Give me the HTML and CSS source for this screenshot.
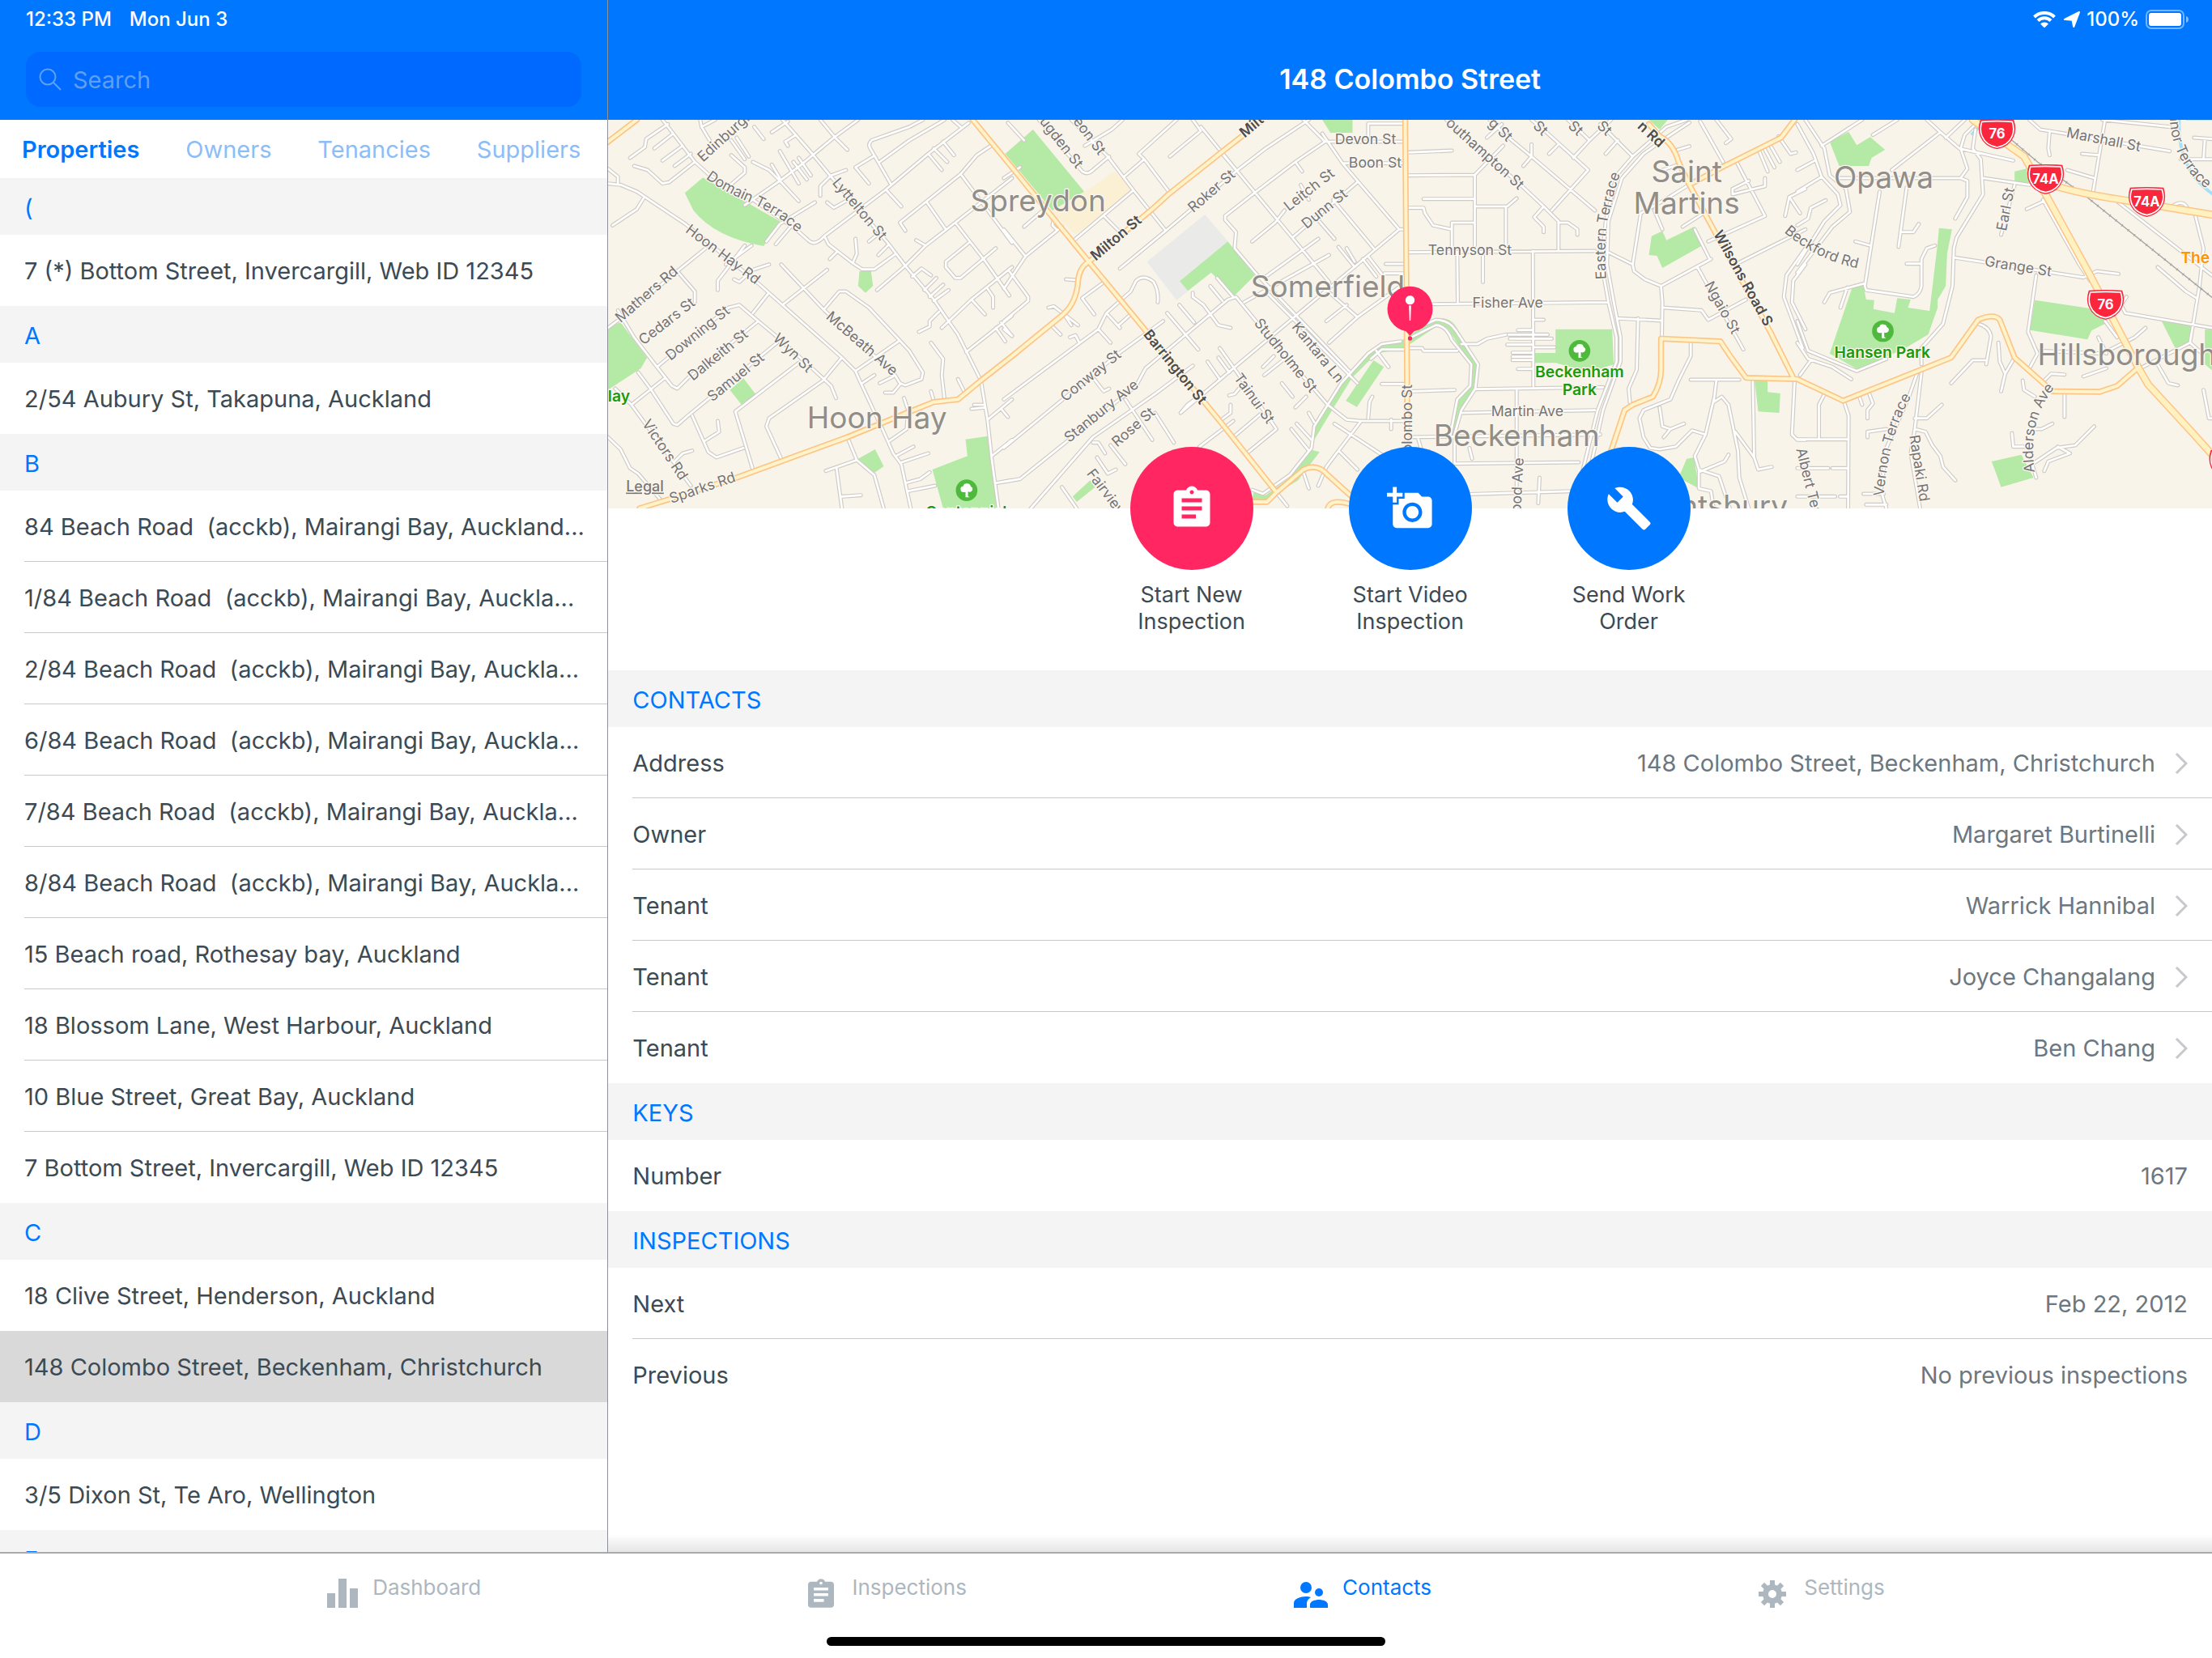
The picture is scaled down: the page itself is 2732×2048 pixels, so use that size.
FILE: index.html
```html
<!DOCTYPE html>
<html lang="en">
<head>
<meta charset="utf-8">
<meta name="viewport" content="width=device-width, initial-scale=1">
<title>148 Colombo Street</title>
<link rel="stylesheet" href="styles.css">
</head>
<body>
<div class="app">
  <div class="split">
    <aside class="sidebar">
      <header class="bar">
        <div class="status"><span>12:33 PM</span><span>Mon Jun 3</span></div>
        <label class="search">
          <svg class="search-icon" viewBox="0 0 28 28" aria-hidden="true"><circle cx="11" cy="11" r="9.500"/><path d="M18 18l9 9"/></svg>
          <input class="search-input" type="search" placeholder="Search" aria-label="Search">
        </label>
      </header>
      <div class="tabs">
        <button class="tab tab-on" type="button">Properties</button>
        <button class="tab" type="button">Owners</button>
        <button class="tab" type="button">Tenancies</button>
        <button class="tab" type="button">Suppliers</button>
      </div>
      <div class="list">
        <h2 class="section">(</h2>
        <ul class="rows">
          <li class="row"><a class="cell" href="#">7 (*) Bottom Street, Invercargill, Web ID 12345</a></li>
        </ul>
        <h2 class="section">A</h2>
        <ul class="rows">
          <li class="row"><a class="cell" href="#">2/54 Aubury St, Takapuna, Auckland</a></li>
        </ul>
        <h2 class="section">B</h2>
        <ul class="rows">
          <li class="row"><a class="cell" href="#">84 Beach Road  (acckb), Mairangi Bay, Auckland...</a></li>
          <li class="row"><a class="cell" href="#">1/84 Beach Road  (acckb), Mairangi Bay, Auckla...</a></li>
          <li class="row"><a class="cell" href="#">2/84 Beach Road  (acckb), Mairangi Bay, Auckla...</a></li>
          <li class="row"><a class="cell" href="#">6/84 Beach Road  (acckb), Mairangi Bay, Auckla...</a></li>
          <li class="row"><a class="cell" href="#">7/84 Beach Road  (acckb), Mairangi Bay, Auckla...</a></li>
          <li class="row"><a class="cell" href="#">8/84 Beach Road  (acckb), Mairangi Bay, Auckla...</a></li>
          <li class="row"><a class="cell" href="#">15 Beach road, Rothesay bay, Auckland</a></li>
          <li class="row"><a class="cell" href="#">18 Blossom Lane, West Harbour, Auckland</a></li>
          <li class="row"><a class="cell" href="#">10 Blue Street, Great Bay, Auckland</a></li>
          <li class="row"><a class="cell" href="#">7 Bottom Street, Invercargill, Web ID 12345</a></li>
        </ul>
        <h2 class="section">C</h2>
        <ul class="rows">
          <li class="row row-before"><a class="cell" href="#">18 Clive Street, Henderson, Auckland</a></li>
          <li class="row row-selected"><a class="cell" href="#" aria-current="true">148 Colombo Street, Beckenham, Christchurch</a></li>
        </ul>
        <h2 class="section">D</h2>
        <ul class="rows">
          <li class="row"><a class="cell" href="#">3/5 Dixon St, Te Aro, Wellington</a></li>
        </ul>
        <h2 class="section">E</h2>
      </div>
    </aside>

    <main class="detail">
      <header class="bar">
        <div class="status status-right">
          <svg class="wifi" viewBox="0 0 28 20" aria-hidden="true"><path d="M1.500 7a18 18 0 0 1 25 0M6 11.500a11.500 11.500 0 0 1 16 0" fill="none" stroke="#fff" stroke-width="4"/><path d="M9 15.500a7 7 0 0 1 10 0L14 20.500z" fill="#fff"/></svg>
          <svg class="arrow" viewBox="0 0 18 18" aria-hidden="true"><path d="M17 1L11 17L9.500 9.500L1 9z" fill="#fff" stroke="#fff" stroke-width="2" stroke-linejoin="round"/></svg>
          <span>100%</span>
          <svg class="battery" viewBox="0 0 54 24" aria-hidden="true"><rect x="1" y="1" width="46" height="22" rx="6" fill="none" stroke="#fff" stroke-opacity=".45" stroke-width="2"/><rect x="4" y="4" width="40" height="16" rx="3" fill="#fff"/><path d="M50 8c4 1 4 7 0 8z" fill="#fff" fill-opacity=".5"/></svg>
        </div>
        <h1 class="title">148 Colombo Street</h1>
      </header>

      <svg class="map" viewBox="3 24 5943 1440" preserveAspectRatio="xMidYMid slice" role="img" aria-label="Map of Beckenham">
        <defs>
          <g id="minor">
            <path d="M205 24L245 75L325 180L375 225L540 320L700 430L745 470Q770 495 805 455L1030 285L1190 150L1340 35M3 260L50 265L110 290L290 410L560 630L650 710L870 905L920 955L940 1000L1020 1170L1060 1260L1090 1300L1125 1464M135 315L110 355L20 415M3 205L40 235V260M85 165L140 125L145 95L225 40M175 130L245 75M205 175L280 120M250 195L310 150M100 195L150 210L205 260L230 255L325 180M345 24L350 50L380 100M350 50L400 24M480 90L525 160M460 100L510 170M460 155L510 200V220L440 280M540 180L600 210L640 250L710 325M510 340L640 250L720 190L840 90L930 24M650 24L760 150L830 235L1040 480L1105 565L1210 690L1265 770L1300 820L1385 990L1410 1140L1425 1280L1450 1464M790 24L845 90L890 135M610 70L670 30M545 50L580 95M700 80L660 105L670 120M640 140L710 260M690 180L740 245M710 165L755 230M610 190L640 240M985 160L920 200L970 260M1170 24L1120 50L980 100Q965 115 975 130L1050 260M1010 180L1120 100L1250 24M1190 150L1240 210M1210 130L1260 180M1245 105L1285 155M1280 24L1310 50M1035 285L1090 345M1430 115L1370 155L1310 225L1085 405L1105 435M1310 225L1500 480M1185 330L1255 430M1500 240L1290 405L1180 490L1105 565L1000 655M1145 470L1180 490M1290 405L1395 540L1490 675M1440 500L1310 610H1290L1255 570V550L1340 480M1500 570L1350 690L1240 795M1350 690L1400 745M1410 650L1430 680V720M1130 605L1165 575L1200 600M1175 655L1220 610M1195 680L1245 635M1210 695L1265 655M1230 735L1195 770V790L1155 810M1330 885L1500 750M1440 795L1475 845M1460 775L1500 825M805 455L820 485L910 555L945 578H990L1070 520M910 555L925 520L920 465M825 540L850 515M1005 525L1040 490M970 475L1000 450M590 475L640 410L770 330M625 485L680 420M815 330L840 350L885 325M790 305V270L830 230L885 210M3 795L50 760L260 585L365 500M260 585L325 660V700M410 655V620L510 490M470 615L490 625L540 580L600 560M440 560L535 490M645 560L730 650L805 730L900 820L1060 960L1085 1000L1105 1008L1165 985L1170 960L1120 880L970 720L885 660H860L805 725M815 580L650 710M595 670L540 740M450 720L490 710L560 770L620 820L760 945L830 1010L848 1055M185 940L450 720M560 770L300 980L260 1020L240 1010L185 940L100 830L40 730M630 850L300 1120L260 1155L245 1150L160 1020L115 960M30 1020L90 1080L215 980M90 1080L310 1380M870 905L800 990L600 1130L590 1160L645 1280M710 925L475 1105L510 1220L540 1320M315 1120L375 1255L405 1275L505 1240M360 1215L415 1180L410 1140M250 1290L280 1260L315 1250M920 955L1080 845M945 1000L990 970M1010 1000L1060 975M1085 1005L1060 1035H1030M1100 1055L1115 1100L1110 1170L1045 1215M1070 1270L1135 1235M1085 1295L1190 1260M1105 1370L1160 1355L1195 1330M1115 1400L1215 1380M1200 850L1245 910L1240 970L1250 1060M1200 1030L1210 1065M1300 985L1325 1035M1350 1095L1400 1090M1360 1080H1395M1410 1135L1500 1060M1460 1095L1485 1125M1425 1270L1500 1210M1440 1370L1500 1360M890 1200L925 1285L990 1340L1025 1464M810 1325L925 1285M850 1315L870 1464M870 1420L940 1415M3 1200L50 1245L85 1315L115 1335L205 1440"/>
            <path transform="translate(1470)" d="M15 35L75 100M130 24L290 215Q310 230 330 210L390 160M250 24L385 160L480 285L600 435M300 120L400 60L440 24M445 235L520 170L500 150L640 24M520 170L615 295M615 160L730 65L700 24M730 50L865 215L1205 625M805 145L865 215M260 470L480 285M370 380L430 440M430 575L600 435L860 215L970 130L1130 24M1105 215L1080 180L935 290L820 380V395L860 440L855 500L940 600L1280 955M1080 180L1190 105L1110 24M1180 75L1255 185L1310 250L1465 430H1490M1190 105H1480M1260 185H1480M920 475L1005 405L1040 360M1070 460L1310 255M1100 265L1130 320M1160 390L1225 465M1220 320L1370 500M1165 465L970 605M1205 525L890 700M1465 430L1310 560L1100 735L850 945L655 1110M1240 495L1300 570M1270 500L1300 550M1330 540L1380 605M1350 530L1400 595M1415 558H1490M1410 593H1490M1350 40V90M1350 38H1480M1270 710L1195 770M1190 650L1310 755L1470 640M970 660L1310 1000M1205 850L1310 755M0 240L60 200M75 420L150 355M0 430L80 530L215 420M0 650L80 530M20 585L90 680V695L0 770M0 800L30 825M185 390L180 415L195 430M230 615L270 618M365 630L290 685L335 745M165 720L185 715L275 785M220 740L250 785M180 790L210 820M245 830L265 822L280 850M0 1060L350 800L380 740L470 660L490 620Q520 595 555 625Q575 660 570 700M350 800L395 850M380 740L430 795M425 785L470 745M0 1240L425 890L590 770M0 1365L60 1355L490 1010L525 945L680 815L830 690L860 680L1000 850L1200 1080L1270 1135L1320 1140H1490M605 740L720 875M650 710L705 775M700 665V680L740 710L795 785L840 795M765 640L810 695M790 610L850 680M755 920L800 985M800 870L850 940L1010 1170L900 1260M795 905L835 960M655 1110L680 1080L740 1035M700 935L560 1040L330 1200L100 1464M335 985L370 1030L390 1020M450 1060L550 1210M560 1110L630 1220M330 1220L350 1220L375 1260M395 1230L450 1300M345 1275L385 1335L415 1320M215 1385L270 1464M725 1235L850 1140M850 1200L950 1115M800 1140L840 1110V1080M835 1045L855 1040L880 1010M965 970L1040 910M960 940L1000 900M1030 1000L1070 1050M1080 1090L1120 1050M1130 1110L1150 1145M1065 1170L1130 1250M1085 1150L1140 1210M920 1395L960 1410L1060 1340L1140 1240L1150 1160L1250 1000L1350 890L1400 855L1470 845M1360 910L1400 875H1490M1380 880L1425 940M1400 1003H1490M1350 1130L1355 1070L1365 1050M1435 1135V1170M1320 1145L1240 1250L1195 1310L1165 1380M1240 1250L1310 1320M1225 1150L1400 1265M1010 1405L1050 1455M1110 1330L1130 1390"/>
            <path transform="translate(2940)" d="M20 145L190 138M20 230L275 228L380 120M275 228V490M85 317H275M275 345H395L430 315M390 345V500M20 350H85L90 370L120 415L190 430M190 505V405H275M20 515L720 510M210 515L212 700M305 525V625M490 510L492 1010M120 707L770 700M170 24L450 270L530 345L585 400V505M530 345L495 385L530 420V440M585 405H620L655 430V450M330 24L400 90L485 160L720 360M375 40L320 90M485 24L540 70L695 210L560 360M455 195L485 160V115M550 150L585 115M620 24L700 100L640 165M780 24L700 100M740 40L860 160M760 150L805 100M1060 24L985 50L860 160L800 230L760 400L745 560L770 700L800 830V920L730 1100L640 1464M1070 34L1000 80L900 150L820 240L770 400L765 560L790 700L815 830V920L750 1100L670 1464M225 855H285L320 835L390 820M20 870H80L85 880H210M435 803H490M400 820H545M405 835H560M395 857H490M492 867H570M415 887H490M415 902H490M415 914H490M435 947H490M490 765H530M45 1030L200 1025M275 1022L750 1015M225 1110L720 1100M430 1020V1464M20 1200L740 1190M65 1205L75 1240M200 1298L660 1293M230 1412L640 1400M515 1350L510 1445M770 515L860 560L865 585L905 615L965 640L970 700L968 830M860 560L890 370L980 320L1060 270M965 640L1150 540M1230 565L1500 430M940 360L970 430M1045 420L1115 375M1090 430L1145 540M1100 570L1270 875M975 720L1115 730L1140 765L1280 690M805 760L968 768M880 760L875 950L845 1020L850 1075M1140 475L1350 380L1245 180M1110 30L1195 180M1350 240V270L1230 300V280L1290 250M1010 140L1070 122M970 210L1030 190M1170 24L1225 95L1205 110M1325 130L1360 215M1345 125L1385 200M1365 110L1405 180M1400 85L1445 150L1465 145M1500 280L1440 310L1425 380M1440 310L1480 370M1075 987H1255M1170 990L1160 1070L1190 1050L1215 1080L1250 1250L1255 1350L1290 1464M1240 1180L1310 1275M1305 990L1310 1275L1325 1320L1375 1310M1160 1060L1130 1190L1090 1270L1105 1320V1390L1150 1400L1160 1464M1105 1320L1180 1345L1220 1464M1075 850V900L1030 990L1000 1060L900 1100L885 1130L900 1200L925 1240L960 1245L1020 1235L1080 1175L1130 1190M960 1090L970 1160L1000 1170L1050 1150M1000 1170L975 1200M1105 1330L1200 1290L1215 1265M1460 990L1450 1190L1470 1210H1500M1500 500L1430 600L1420 680L1490 870M1500 560L1455 620L1450 700L1500 800M40 830L130 785Q170 785 190 840L262 930L258 1010L210 1060L185 1190M25 810L130 765Q180 765 205 805L287 930L277 1020L225 1100L200 1190V1295M255 1240L265 1280"/>
            <path transform="translate(4410)" d="M0 40L60 150L90 235L150 300L160 340L100 400L0 560M30 24L100 130L120 230L180 280L195 365L130 420L0 590M90 120L240 24M0 210L65 175M0 290L90 235M280 80L370 24M350 210L530 70L480 24M550 90L620 24M530 70L600 130L800 175M150 240H605L630 205L605 130L620 80L660 40M605 240L630 250V310L585 390M660 60L650 130L680 170L688 300L590 460L580 500L575 640L540 780L460 870V930M860 24L900 60L1380 140M935 65L930 130L935 155M1140 24L1095 295M1055 150L1115 155M1000 210L1100 240M690 240L860 265M1130 24L1380 50M305 290L250 640L255 655L430 680Q455 670 460 640V540L480 500L510 490M405 275L375 495M385 440H430L450 410M0 415L40 390L50 350L105 322M215 475L270 490M405 557H460M250 630L120 665L100 700M185 645L160 720M0 770L40 880L220 955L330 910M0 850L40 910L130 940L200 985M50 915L10 970M585 535L1060 608L1110 585L1190 595M885 600L855 810L890 890L860 945M910 320L1045 560L1085 620M850 355L915 325M805 265L755 450M1190 330L1536 600M1475 380L1505 500L1490 640L1455 850L1500 890M1335 570L1440 660L1480 685M1536 795L1215 740L1200 710L1220 680M1470 90L1536 95M1510 95L1505 170M1420 170H1536M1395 340Q1430 320 1445 350M1455 850L1280 940M1290 795L1250 830L1130 890L900 880M1115 830L1145 890M1060 975L1145 945M1335 930L1375 1000L1410 1008M670 780Q710 790 718 825L700 930M700 915H650L570 1000M745 850L750 920L770 965L805 905M770 965L755 1030M910 995L940 965L990 968M990 1040V1125M835 990L840 1025L880 1050M98 1045L80 1080V1205M0 1208H190M175 1075L190 1120L188 1464M230 1050L240 1080M265 1035L280 1075L260 1100V1130M0 1315H115M130 1315H188M0 1420H140M158 1420H188M245 1410H320M255 1450H330M445 960L410 1060L330 1240L310 1400L330 1464M460 960L435 1170L420 1260L455 1464M435 1130H480L535 1080M435 1170L475 1180L500 1230L530 1270L540 1310L585 1360M260 1200V1180L330 1170M865 1170H905L945 1150M795 1185L800 1235H850M885 1350L870 1300L960 1240L1030 1230L1100 1160M915 1325L930 1290L1010 1260L965 1235M1185 830L1140 770M1505 1025L1525 1130H1540"/>
          </g>
          <g id="major">
            <path d="M0 108L110 24M120 1464L230 1430L480 1350L890 1200L1110 1110L1210 1070L1300 1060L1385 990L1500 900L1690 745Q1740 700 1745 620Q1750 570 1785 550L2020 355L2080 300L2275 145L2430 24M1355 24L1500 200L1785 550L1905 695L2270 1140L2480 1405L2580 1320Q2630 1295 2670 1340L2770 1430M2390 1440H2445L2480 1405M2670 1464Q2680 1425 2760 1450"/>
            <path d="M2957 24L2962 700L2967 1464M3860 40L3900 85Q3950 110 3970 180L4010 265L4105 440L4310 810L4395 980M4010 265L4140 195L4350 90L4400 24M3720 1250L3770 1100L3800 1080L3875 1050Q3905 1000 3905 950V835L4125 845L4165 905L4220 980L4410 985L4580 1065L4855 955L4980 905L5080 765Q5140 740 5160 765L5215 905L5355 1030L5530 1032L5595 1010L5670 945"/>
          </g>
          <path id="highway" d="M5060 24L5250 160L5330 300L5495 600L5675 945L5710 1005L5880 1190L5960 1280M5310 250Q5410 290 5610 320L5960 378"/>
          <g id="tree"><circle r="40" fill="#4fb93d"/><path d="M-4 26V6Q-22 10-22-3Q-24-14-13-15Q-10-27 2-25Q14-24 15-14Q25-10 21 0Q16 9 5 5V22L12 26z" fill="#fff"/></g>
          <g id="shield">
            <path d="M-62-54Q0-58 62-54Q74-20 62 8Q46 46 0 55Q-46 46-62 8Q-74-20-62-54z"/>
            <path class="shield-line" d="M-56-47Q0-51 56-47Q66-18 56 6Q42 40 0 48Q-42 40-56 6Q-66-18-56-47z"/>
          </g>
          <path id="domain" d="M365 240Q420 285 540 335Q640 380 720 455"/>
          <path id="eastern" d="M3702 615Q3690 420 3720 350Q3735 260 3770 190"/>
          <path id="beckford" d="M4360 440Q4500 560 4690 584"/>
          <path id="vernon" d="M4730 1420Q4750 1170 4850 1020"/>
          <path id="alderson" d="M5290 1330Q5260 1130 5370 1010"/>
          <path id="connor" d="M5790 0Q5790 200 5970 310"/>
        </defs>

        <path class="land" d="M0 0H5950V1470H0z"/>
        <path class="school" d="M1770 290L1880 215L1950 285L1735 450L1650 365z"/>
        <path class="yard" d="M2000 550L2215 375L2300 475L2150 660L2110 692z"/>
        <g class="park">
          <path d="M288 295L355 238L640 400L580 492Q400 460 320 360z"/>
          <path d="M3 790L50 775L148 905L125 945L3 1025zM455 1025L505 982L550 1040L500 1082zM935 585H978L985 640L957 665L930 640zM930 1280L993 1245L1025 1308L990 1332zM1205 1320L1335 1270L1328 1208L1410 1196L1445 1464H1245z"/>
          <path d="M1475 150L1578 60L1768 290L1650 360zM2300 475L2400 600L2325 675L2238 590L2152 658L2122 622zM2650 24H2762V72H2680zM2840 915L2878 940L2778 1088L2737 1065zM1725 1420L1790 1360L1808 1385L1740 1440z"/>
          <path d="M2960 835L2870 860L2800 900L2720 1000L2660 1090L2625 1150L2620 1210L2680 1110L2760 980L2850 890L2960 870zM2600 1245L2640 1255L2560 1360L2480 1410L2445 1435H2390L2395 1405L2440 1415L2530 1350z"/>
          <path d="M3514 800H3724L3730 930L3640 960L3515 925H3438V888H3514zM3870 455L3910 436L3925 470L4028 420L4058 490L3910 573L3890 528L3860 525zM3860 24H3930L3900 60zM4252 990H4300V1033L4347 1038L4343 1110L4265 1105zM4030 1275H4027L4045 1390L3970 1350L4000 1280z"/>
          <path d="M4530 105L4600 68L4630 118L4680 88L4735 135L4685 165L4675 195H4565zM4615 640H4655L4665 690L4695 692L4692 725L4770 740L4780 685L4830 690L4820 720L4900 732L4930 480L4935 425L4983 430L4965 520L4960 640L4930 690L4930 720L4895 820L4810 870L4635 950L4530 890zM5290 692L5490 722L5560 775L5500 805L5485 838L5272 803zM5215 215L5260 205L5270 260L5215 250zM5760 770L5870 785L5860 845L5810 870zM5920 800H5950V955L5920 930zM5130 1290L5240 1265L5285 1350L5165 1385z"/>
        </g>
        <path class="river" d="M2965 845L3070 775Q3120 765 3140 810L3215 930L3210 1015L3160 1080L3130 1190"/>
        <path class="water" d="M5825 24Q5820 120 5855 190Q5880 250 5950 300M5850 20H5950M5055 80L5080 55"/>
        <use href="#minor" class="minor-edge"/>
        <use href="#minor" class="minor-fill"/>
        <path class="rail" d="M5200 95L5300 180L5470 300L5950 685"/>
        <path class="rail rail-ties" d="M5200 95L5300 180L5470 300L5950 685"/>
        <use href="#major" class="major-edge"/>
        <use href="#highway" class="highway-edge"/>
        <use href="#major" class="major-fill"/>
        <use href="#highway" class="highway-fill"/>

        <g class="street">
          <text transform="translate(355 182) rotate(-42)">Edinburgh St</text>
          <text><textPath href="#domain">Domain Terrace</textPath></text>
          <text transform="translate(288 438) rotate(37)">Hoon Hay Rd</text>
          <text transform="translate(50 778) rotate(-41)">Mathers Rd</text>
          <text transform="translate(135 860) rotate(-38)">Cedars St</text>
          <text transform="translate(235 918) rotate(-39)">Downing St</text>
          <text transform="translate(318 993) rotate(-39)">Dalkeith St</text>
          <text transform="translate(390 1070) rotate(-39)">Samuel St</text>
          <text transform="translate(612 838) rotate(44)">Wyn St</text>
          <text transform="translate(808 758) rotate(41)">McBeath Ave</text>
          <text transform="translate(832 258) rotate(50)">Lyttelton St</text>
          <text transform="translate(128 1150) rotate(56)">Victors Rd</text>
          <text transform="translate(238 1446) rotate(-19)">Sparks Rd</text>
          <text transform="translate(1600 30) rotate(52)">ugden St</text>
          <text transform="translate(1725 30) rotate(53)">eon St</text>
          <text transform="translate(2172 370) rotate(-41)">Roker St</text>
          <text transform="translate(2526 364) rotate(-38)">Leitch St</text>
          <text transform="translate(2592 430) rotate(-39)">Dunn St</text>
          <text x="2697" y="115">Devon St</text>
          <text x="2748" y="202">Boon St</text>
          <text transform="translate(1698 1070) rotate(-39)">Conway St</text>
          <text transform="translate(1712 1222) rotate(-39)">Stanbury Ave</text>
          <text transform="translate(1890 1238) rotate(-41)">Rose St</text>
          <text transform="translate(2395 778) rotate(51)">Studholme St</text>
          <text transform="translate(2535 792) rotate(51)">Kantara Ln</text>
          <text transform="translate(2320 980) rotate(54)">Tainui St</text>
          <text transform="translate(1775 1335) rotate(53)">Fairview</text>
          <text transform="translate(2983 1258) rotate(-90)">olombo St</text>
          <text transform="translate(3105 40) rotate(42)">outhampton St</text>
          <text transform="translate(3262 40) rotate(43)">g St</text>
          <text transform="translate(3428 50) rotate(43)">St</text>
          <text transform="translate(3558 50) rotate(43)">St</text>
          <text transform="translate(3665 50) rotate(43)">St</text>
          <text x="3042" y="526">Tennyson St</text>
          <text x="3206" y="719">Fisher Ave</text>
          <text x="3276" y="1121">Martin Ave</text>
          <text transform="translate(3385 1480) rotate(-87)">ood Ave</text>
          <text><textPath href="#eastern">Eastern Terrace</textPath></text>
          <text transform="translate(4065 635) rotate(61)">Ngaio St</text>
          <text><textPath href="#beckford">Beckford Rd</textPath></text>
          <text transform="translate(5405 88) rotate(11)">Marshall St</text>
          <text transform="translate(5184 438) rotate(-79)">Earl St</text>
          <text transform="translate(5102 565) rotate(9)">Grange St</text>
          <text><textPath href="#vernon">Vernon Terrace</textPath></text>
          <text transform="translate(4825 1195) rotate(81)">Rapaki Rd</text>
          <text><textPath href="#alderson">Alderson Ave</textPath></text>
          <text transform="translate(4405 1245) rotate(76)">Albert Ter</text>
          <text><textPath href="#connor">nnor Terrace</textPath></text>
        </g>
        <g class="street street-major">
          <text transform="translate(1810 548) rotate(-40)">Milton St</text>
          <text transform="translate(2362 92) rotate(-40)">Milton</text>
          <text transform="translate(1985 820) rotate(51)">Barrington St</text>
          <text transform="translate(3815 52) rotate(43)">n Rd</text>
          <text transform="translate(4098 446) rotate(61)">Wilsons Road S</text>
        </g>
        <g class="suburb">
          <text x="1000" y="1168" text-anchor="middle">Hoon Hay</text>
          <text x="1346" y="362">Spreydon</text>
          <text x="2385" y="682">Somerfield</text>
          <text x="4000" y="256" text-anchor="middle">Saint</text>
          <text x="4000" y="372" text-anchor="middle">Martins</text>
          <text x="3370" y="1234" text-anchor="middle">Beckenham</text>
          <text x="4730" y="275" text-anchor="middle">Opawa</text>
          <text x="5300" y="932">Hillsborough</text>
          <text x="4375" y="1493" text-anchor="end">Huntsbury</text>
        </g>
        <g class="poi">
          <text x="3" y="1068">lay</text>
          <text x="1330" y="1497" text-anchor="middle">Centennial</text>
          <text x="3603" y="979" text-anchor="middle">Beckenham</text>
          <text x="3603" y="1043" text-anchor="middle">Park</text>
          <text x="4725" y="907" text-anchor="middle">Hansen Park</text>
          <text class="poi-food" x="5830" y="555">The</text>
        </g>
        <use href="#tree" x="1332" y="1397"/>
        <use href="#tree" x="3603" y="880"/>
        <use href="#tree" x="4727" y="807"/>
        <g class="shields">
          <use href="#shield" x="5150" y="78"/><text x="5150" y="92">76</text>
          <use href="#shield" x="5330" y="245"/><text x="5330" y="260">74A</text>
          <use href="#shield" x="5705" y="329"/><text x="5705" y="344">74A</text>
          <use href="#shield" x="5552" y="710"/><text x="5552" y="726">76</text>
          <use href="#shield" x="6004" y="1302"/>
        </g>
        <text class="legal" x="70" y="1402">Legal</text>
        <g class="pin">
          <circle cx="2975" cy="725" r="84"/><path d="M2953 800L2975 824L2997 800z"/><circle cx="2975" cy="834" r="8"/>
          <circle cx="2975" cy="692" r="17" fill="#fff"/><path d="M2971 712h8l-2 56h-4z" fill="#fff"/>
        </g>
      </svg>

      <div class="actions">
        <button class="action" type="button">
          <span class="disc disc-red"><svg viewBox="0 0 24 24" aria-hidden="true"><path d="M19 3h-4.180C14.400 1.840 13.300 1 12 1c-1.300 0-2.400.84-2.820 2H5c-1.100 0-2 .9-2 2v14c0 1.100.9 2 2 2h14c1.100 0 2-.9 2-2V5c0-1.100-.9-2-2-2zm-7 0c.55 0 1 .45 1 1s-.45 1-1 1-1-.45-1-1 .45-1 1-1zm2 14H7v-2h7v2zm3-4H7v-2h10v2zm0-4H7V7h10v2z"/></svg></span>
          <span>Start New<br>Inspection</span>
        </button>
        <button class="action" type="button">
          <span class="disc"><svg viewBox="0 0 24 24" aria-hidden="true"><path d="M3 4V1h2v3h3v2H5v3H3V6H0V4h3zm3 6V7h3V4h7l1.830 2H21c1.100 0 2 .9 2 2v12c0 1.100-.9 2-2 2H5c-1.100 0-2-.9-2-2V10h3zm7 9c2.760 0 5-2.240 5-5s-2.240-5-5-5-5 2.240-5 5 2.240 5 5 5zm-3.200-5c0 1.770 1.430 3.200 3.200 3.200s3.200-1.430 3.200-3.200-1.430-3.200-3.200-3.200-3.200 1.430-3.200 3.200z"/></svg></span>
          <span>Start Video<br>Inspection</span>
        </button>
        <button class="action" type="button">
          <span class="disc"><svg viewBox="0 0 24 24" aria-hidden="true"><path d="M22.700 19l-9.100-9.100c.9-2.300.4-5-1.500-6.900-2-2-5-2.400-7.400-1.300L9 6 6 9 1.600 4.700C.4 7.100.9 10.100 2.900 12.100c1.900 1.900 4.600 2.400 6.900 1.500l9.100 9.100c.4.400 1 .4 1.400 0l2.300-2.300c.5-.4.5-1.100.1-1.400z"/></svg></span>
          <span>Send Work<br>Order</span>
        </button>
      </div>

      <h2 class="section">CONTACTS</h2>
      <ul class="rows">
        <li class="row"><a class="cell" href="#"><span>Address</span><span class="value">148 Colombo Street, Beckenham, Christchurch</span><svg class="chevron" viewBox="0 0 16 26" aria-hidden="true"><path d="M2 1l12 12L2 25"/></svg></a></li>
        <li class="row"><a class="cell" href="#"><span>Owner</span><span class="value">Margaret Burtinelli</span><svg class="chevron" viewBox="0 0 16 26" aria-hidden="true"><path d="M2 1l12 12L2 25"/></svg></a></li>
        <li class="row"><a class="cell" href="#"><span>Tenant</span><span class="value">Warrick Hannibal</span><svg class="chevron" viewBox="0 0 16 26" aria-hidden="true"><path d="M2 1l12 12L2 25"/></svg></a></li>
        <li class="row"><a class="cell" href="#"><span>Tenant</span><span class="value">Joyce Changalang</span><svg class="chevron" viewBox="0 0 16 26" aria-hidden="true"><path d="M2 1l12 12L2 25"/></svg></a></li>
        <li class="row"><a class="cell" href="#"><span>Tenant</span><span class="value">Ben Chang</span><svg class="chevron" viewBox="0 0 16 26" aria-hidden="true"><path d="M2 1l12 12L2 25"/></svg></a></li>
      </ul>
      <h2 class="section">KEYS</h2>
      <ul class="rows">
        <li class="row"><div class="cell"><span>Number</span><span class="value">1617</span></div></li>
      </ul>
      <h2 class="section">INSPECTIONS</h2>
      <ul class="rows">
        <li class="row"><div class="cell"><span>Next</span><span class="value">Feb 22, 2012</span></div></li>
        <li class="row"><div class="cell"><span>Previous</span><span class="value">No previous inspections</span></div></li>
      </ul>
      <div class="fade"></div>
    </main>
  </div>

  <footer class="dock">
    <nav class="nav">
      <a class="nav-item" href="#"><svg width="38" height="36" viewBox="0 0 38 36" aria-hidden="true"><path d="M0 18h10v18H0zM14 0h10v36H14zM28 12h10v24H28z"/></svg><span>Dashboard</span></a>
      <a class="nav-item nav-wide" href="#"><svg width="32" height="36" viewBox="3 1 18 20" aria-hidden="true"><path d="M19 3h-4.180C14.400 1.840 13.300 1 12 1c-1.300 0-2.400.84-2.820 2H5c-1.100 0-2 .9-2 2v14c0 1.100.9 2 2 2h14c1.100 0 2-.9 2-2V5c0-1.100-.9-2-2-2zm-7 0c.55 0 1 .45 1 1s-.45 1-1 1-1-.45-1-1 .45-1 1-1zm2 14H7v-2h7v2zm3-4H7v-2h10v2zm0-4H7V7h10v2z"/></svg><span>Inspections</span></a>
      <a class="nav-item nav-on" href="#" aria-current="page"><svg width="42" height="32" viewBox="0 0 42 32" aria-hidden="true"><circle cx="15" cy="7" r="7"/><circle cx="31" cy="13" r="5"/><path d="M0 32v-6C0 21 8 18 15 18c2 0 4 0 6 1-4 3-5 5-5 8v5zM20 32v-4c0-4 6-6 11-6s11 2 11 6v4z"/></svg><span>Contacts</span></a>
      <a class="nav-item nav-wide" href="#"><svg width="34" height="34" viewBox="-17 -17 34 34" aria-hidden="true"><circle r="8.500" fill="none" stroke="currentColor" stroke-width="7"/><g id="teeth"><path d="M-3-17h6v6h-6zM-3 11h6v6h-6zM-17-3h6v6h-6zM11-3h6v6h-6z"/></g><use href="#teeth" transform="rotate(45)"/></svg><span>Settings</span></a>
    </nav>
    <div class="home"></div>
  </footer>
</div>
</body>
</html>
```
FILE: styles.css
```css
* { box-sizing: border-box; }

body {
  margin: 0;
  background: #fff;
  color: #3c4a54;
  font: 400 29px/36px Inter, "Liberation Sans", sans-serif;
}

h1, h2, ul { margin: 0; padding: 0; font-weight: 400; }
ul { list-style: none; }
a { color: inherit; text-decoration: none; }
button { border: 0; padding: 0; background: none; font: inherit; color: inherit; cursor: pointer; }
svg { display: block; flex: none; }

.app { display: flex; flex-direction: column; height: 100vh; }
.split {
  flex: 1;
  min-height: 0;
  display: grid;
  grid-template-columns: minmax(0, 11fr) minmax(0, 29fr);
}
.sidebar, .detail { display: flex; flex-direction: column; min-height: 0; overflow: hidden; }
.sidebar { border-right: 1px solid #8e9296; }
.detail { position: relative; }

/* Blue header */
.bar { flex: none; height: 148px; padding: 0 32px; background: #0077ff; color: #fff; }
.status {
  display: flex;
  align-items: center;
  gap: 22px;
  height: 48px;
  margin-bottom: 16px;
  font-size: 24px;
  font-weight: 500;
  line-height: 28px;
}
.status-right { justify-content: flex-end; gap: 8px; margin-right: -4px; }
.wifi { width: 28px; height: 20px; margin-right: 2px; }
.arrow { width: 20px; height: 20px; }
.battery { width: 54px; height: 24px; }
.search {
  display: flex;
  align-items: center;
  gap: 14px;
  height: 68px;
  padding: 0 16px;
  border-radius: 18px;
  background: #0069ff;
}
.search-icon { width: 28px; height: 28px; fill: none; stroke: #5ea1f5; stroke-width: 2; }
.search-input {
  flex: 1;
  min-width: 0;
  padding: 2px 0 0;
  border: 0;
  outline: 0;
  background: none;
  color: #fff;
  font: inherit;
}
.search-input::placeholder { color: #5f9ff0; opacity: 1; }
.title { font-size: 34px; font-weight: 600; line-height: 68px; text-align: center; }

/* Sidebar */
.tabs {
  flex: none;
  display: flex;
  justify-content: space-between;
  align-items: center;
  height: 72px;
  padding: 2px 33px 0 27px;
}
.tab { color: #8bbdf9; }
.tab-on { color: #0077ff; font-weight: 600; }
.list { flex: 1; min-height: 0; overflow: hidden; }
.section {
  flex: none;
  height: 70px;
  padding: 2px 30px 0;
  background: #f4f4f4;
  color: #0077ff;
  font-size: 29px;
  line-height: 70px;
}
.row { padding-left: 30px; }
.cell {
  display: flex;
  align-items: center;
  height: 88px;
  padding: 2px 30px 0 0;
  border-bottom: 1px solid #c8c7cc;
  white-space: pre;
}
.row:last-child .cell, .row-before .cell { border-bottom-color: transparent; }
.row-selected { background: #d9d9d9; }

/* Detail */
.map { width: 100%; height: 480px; }
.actions {
  position: relative;
  flex: none;
  display: flex;
  justify-content: center;
  gap: 118px;
  height: 276px;
  margin-top: -76px;
}
.action {
  display: flex;
  flex-direction: column;
  align-items: center;
  gap: 14px;
  width: 152px;
  font-size: 27px;
  line-height: 33px;
  white-space: nowrap;
}
.disc {
  display: grid;
  place-items: center;
  width: 152px;
  height: 152px;
  border-radius: 50%;
  background: #0077ff;
}
.disc svg { width: 58px; height: 58px; fill: #fff; }
.disc-red { background: #ff2662; }
.disc-red svg { width: 60px; height: 60px; }
.value { margin-left: auto; color: #6c7780; }
.chevron { width: 16px; height: 26px; margin-left: 24px; fill: none; stroke: #c7c7cc; stroke-width: 3; }
.fade {
  position: absolute;
  inset: auto 0 0;
  height: 22px;
  background: linear-gradient(rgba(0, 0, 0, 0), rgba(0, 0, 0, .1));
}

/* Map */
.land { fill: #f9f4ea; }
.school { fill: #fbf0d3; }
.yard { fill: #eaeae8; }
.park { fill: #b5e9a6; }
.river { fill: none; stroke: #b5e9a6; stroke-width: 28; }
.water { fill: none; stroke: #a5e0f8; stroke-width: 12; }
.minor-edge, .minor-fill, .major-edge, .major-fill, .highway-edge, .highway-fill {
  fill: none;
  stroke-linejoin: round;
  stroke-linecap: round;
}
.minor-edge { stroke: #cfcac4; stroke-width: 15; }
.minor-fill { stroke: #fff; stroke-width: 8; }
.major-edge { stroke: #fdc486; stroke-width: 22; }
.major-fill { stroke: #fff3c9; stroke-width: 12; }
.highway-edge { stroke: #fdc486; stroke-width: 29; }
.highway-fill { stroke: #fff1c0; stroke-width: 20; }
.rail { fill: none; stroke: #a3a3a3; stroke-width: 4; }
.rail-ties { stroke-width: 10; stroke-dasharray: 3 26; }
.map text { stroke: #fbf7ef; stroke-width: 8; stroke-linejoin: round; paint-order: stroke; }
.street { font-size: 53px; fill: #757476; }
.street-major { font-weight: 600; fill: #4f4d4b; }
.suburb { font-size: 111px; fill: #918d88; }
.poi { font-size: 58px; font-weight: 600; fill: #1a9a0c; }
.poi-food { fill: #ff9500; }
.shields { fill: #f9263c; font-size: 50px; font-weight: 700; text-anchor: middle; }
.shield-line { fill: none; stroke: #fff; stroke-width: 5; }
.map .shields text { fill: #fff; stroke: none; }
.map .legal { font-size: 54px; font-weight: 500; fill: #7a7875; text-decoration: underline; }
.pin { fill: #ff2662; }

/* Bottom bar */
.dock { flex: none; height: 131px; border-top: 2px solid #a8abae; background: #fff; }
.nav { display: flex; justify-content: space-evenly; height: 103px; padding-top: 25px; }
.nav-item {
  display: flex;
  align-items: flex-end;
  gap: 18px;
  height: 42px;
  color: #adb7bf;
  font-size: 26px;
  line-height: 34px;
}
.nav-item span { align-self: flex-start; }
.nav-item svg { fill: currentColor; }
.nav-wide { gap: 22px; }
.nav-on { color: #0077ff; }
.home { width: 690px; height: 11px; margin: 0 auto; border-radius: 6px; background: #000; }
```
